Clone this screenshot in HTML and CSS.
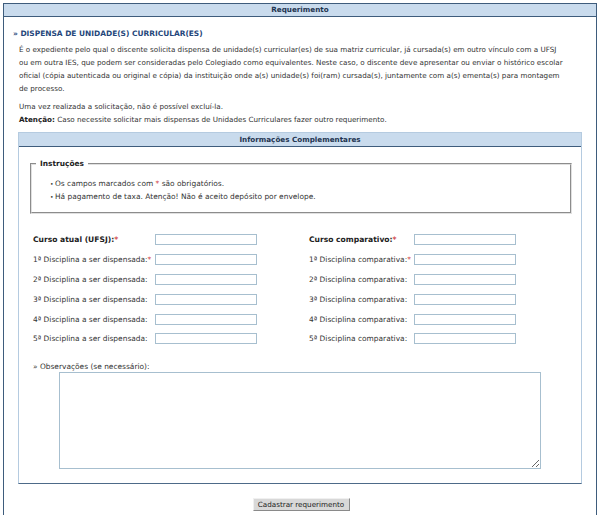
FILE: index.html
```html
<!DOCTYPE html>
<html lang="pt-BR">
<head>
<meta charset="utf-8">
<title>Requerimento</title>
<link rel="stylesheet" href="styles.css">
</head>
<body>
<div class="box">
  <div class="box-head">Requerimento</div>
  <div class="box-body">
    <h2 class="title">» DISPENSA DE UNIDADE(S) CURRICULAR(ES)</h2>
    <p class="para">É o expediente pelo qual o discente solicita dispensa de unidade(s) curricular(es) de sua matriz curricular, já cursada(s) em outro vínculo com a UFSJ ou em outra IES, que podem ser consideradas pelo Colegiado como equivalentes. Neste caso, o discente deve apresentar ou enviar o histórico escolar oficial (cópia autenticada ou original e cópia) da instituição onde a(s) unidade(s) foi(ram) cursada(s), juntamente com a(s) ementa(s) para montagem de processo.</p>
    <p class="para">Uma vez realizada a solicitação, não é possível excluí-la.<br><strong>Atenção:</strong> Caso necessite solicitar mais dispensas de Unidades Curriculares fazer outro requerimento.</p>

    <div class="inner">
      <div class="inner-head">Informações Complementares</div>
      <fieldset class="instr">
        <legend>Instruções</legend>
        <ul>
          <li>Os campos marcados com <span class="req">*</span> são obrigatórios.</li>
          <li>Há pagamento de taxa. Atenção! Não é aceito depósito por envelope.</li>
        </ul>
      </fieldset>

      <div class="form-grid">
        <label class="lbl strong">Curso atual (UFSJ):<span class="req">*</span></label>
        <input class="fld" type="text">
        <span></span>
        <label class="lbl strong">Curso comparativo:<span class="req">*</span></label>
        <input class="fld" type="text">

        <label class="lbl">1ª Disciplina a ser dispensada:<span class="req">*</span></label>
        <input class="fld" type="text">
        <span></span>
        <label class="lbl">1ª Disciplina comparativa:<span class="req">*</span></label>
        <input class="fld" type="text">

        <label class="lbl">2ª Disciplina a ser dispensada:</label>
        <input class="fld" type="text">
        <span></span>
        <label class="lbl">2ª Disciplina comparativa:</label>
        <input class="fld" type="text">

        <label class="lbl">3ª Disciplina a ser dispensada:</label>
        <input class="fld" type="text">
        <span></span>
        <label class="lbl">3ª Disciplina comparativa:</label>
        <input class="fld" type="text">

        <label class="lbl">4ª Disciplina a ser dispensada:</label>
        <input class="fld" type="text">
        <span></span>
        <label class="lbl">4ª Disciplina comparativa:</label>
        <input class="fld" type="text">

        <label class="lbl">5ª Disciplina a ser dispensada:</label>
        <input class="fld" type="text">
        <span></span>
        <label class="lbl">5ª Disciplina comparativa:</label>
        <input class="fld" type="text">
      </div>

      <div class="obs">
        <label class="lbl">» Observações (se necessário):</label>
        <textarea class="obs-area"></textarea>
      </div>
    </div>

    <div class="actions">
      <button class="btn" type="button">Cadastrar requerimento</button>
    </div>
  </div>
</div>
</body>
</html>
```

FILE: styles.css
```css
html, body {
  margin: 0;
  padding: 0;
  background: #ffffff;
}

body {
  font-family: "DejaVu Sans", Verdana, sans-serif;
  font-size: 7.45px;
  color: #333333;
  padding: 3px 3px 0 3px;
}

.box {
  border: 1px solid #3e5c7c;
  border-bottom: none;
  min-height: 520px;
}

.box-head {
  height: 12px;
  line-height: 12px;
  background: #c9dbed;
  border-bottom: 1px solid #3e5c7c;
  text-align: center;
  font-weight: bold;
  color: #1e3450;
  font-size: 7.2px;
}

.box-body {
  padding: 0 14px 0 14px;
}

.title {
  margin: 10px 0 0 -5px;
  font-size: 7.45px;
  line-height: 13px;
  font-weight: bold;
  color: #24467a;
}

.para {
  margin: 3px 0 0 1px;
  line-height: 13px;
  width: 547px;
  font-size: 7.2px;
}

.para + .para {
  margin-top: 5px;
}

.para strong {
  color: #222;
}

.inner {
  margin-top: 6px;
  border: 1px solid #b5cbe0;
  border-bottom: 1px solid #4d6a88;
  padding-bottom: 14px;
}

.inner-head {
  height: 13px;
  line-height: 13px;
  background: #c9dbed;
  border-bottom: 1px solid #3e5c7c;
  text-align: center;
  font-weight: bold;
  color: #1e3450;
  font-size: 7.2px;
}

.instr {
  margin: 12px 9px 0 11px;
  padding: 0 0 9px 0;
  border: 2px groove #e0e0e0;
}

.instr legend {
  font-weight: bold;
  padding: 0 4px;
  margin-left: 4px;
  color: #222;
}

.instr ul {
  list-style: none;
  margin: 9px 0 0 0;
  padding: 0 0 0 18px;
  line-height: 13px;
}

.instr li::before {
  content: "•";
  display: inline-block;
  width: 5px;
  font-size: 6px;
  color: #333;
}

.req {
  color: #d04040;
}

.form-grid {
  display: grid;
  grid-template-columns: 122px 102px 52px 105px 102px;
  grid-auto-rows: 19.8px;
  align-items: center;
  margin: 16px 0 0 14px;
}

.lbl {
  white-space: nowrap;
}

.lbl.strong {
  font-weight: bold;
  color: #222;
  font-size: 7.6px;
}

.fld {
  box-sizing: border-box;
  width: 102px;
  height: 11px;
  margin: 0;
  padding: 0;
  border: 1px solid #a7bfcf;
  background: #fff;
  font-size: 7px;
}

.obs {
  margin: 13px 0 0 14px;
  display: flex;
  flex-direction: column;
}

.obs .lbl {
  line-height: 10px;
}

.obs-area {
  box-sizing: border-box;
  margin: 0 0 0 26px;
  width: 482px;
  height: 97px;
  border: 1px solid #a7bfcf;
  padding: 0;
  font-size: 7px;
}

.actions {
  display: flex;
  justify-content: center;
  margin-top: 14px;
  padding-left: 2px;
}

.btn {
  box-sizing: border-box;
  width: 97px;
  height: 13px;
  padding: 0;
  font-family: "DejaVu Sans", Verdana, sans-serif;
  font-size: 7.2px;
  color: #222;
  background: #d8d8d8;
  border: 1px solid #8a8a8a;
  border-top-color: #f0f0f0;
  border-left-color: #f0f0f0;
  line-height: 11px;
}
```
